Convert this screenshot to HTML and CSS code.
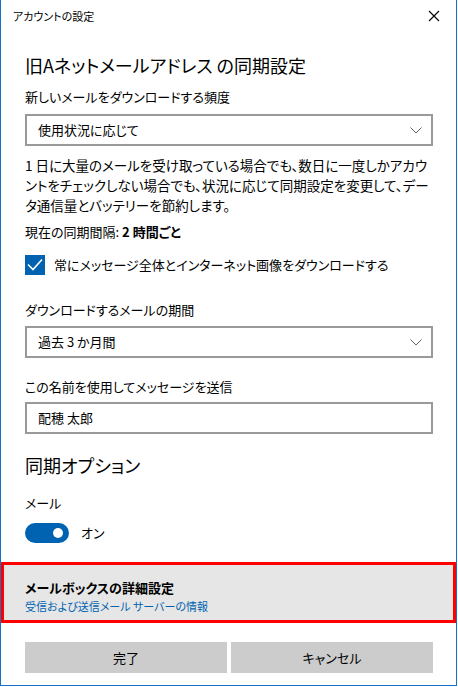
FILE: index.html
```html
<!DOCTYPE html>
<html lang="ja">
  <head>
    <meta charset="utf-8">
    <title>アカウントの設定</title>
    <link rel="stylesheet" href="styles.css">
  </head>
  <body>
    <div class="window">
      <div class="titlebar">
        <span class="caption">アカウントの設定</span>
        <span class="close">
          <svg width="12" height="12" viewBox="0 0 12 12">
            <path d="M1 1 L11 11 M11 1 L1 11" stroke="#000" stroke-width="1.1" fill="none"/>
          </svg>
        </span>
      </div>

      <div class="content">
        <div class="heading">旧Aネットメールアドレス の同期設定</div>

        <div class="label label-first">新しいメールをダウンロードする頻度</div>
        <div class="select">
          <span>使用状況に応じて</span>
          <svg class="chevron" width="12" height="7" viewBox="0 0 12 7">
            <polyline points="0.5,0.5 6,6 11.5,0.5" stroke="#666" stroke-width="1" fill="none"/>
          </svg>
        </div>

        <p class="description">
          <span>1 日に大量のメールを受け取っている場合でも、数日に一度しかアカウ</span>
          <span>ントをチェックしない場合でも、状況に応じて同期設定を変更して、デー</span>
          <span>タ通信量とバッテリーを節約します。</span>
        </p>

        <div class="interval">現在の同期間隔: <b>2 時間ごと</b></div>

        <div class="check-row">
          <span class="checkbox">
            <svg width="20" height="20" viewBox="0 0 20 20">
              <polyline points="3,9.5 8,14.5 17,4.5" stroke="#fff" stroke-width="1.6" fill="none"/>
            </svg>
          </span>
          <span>常にメッセージ全体とインターネット画像をダウンロードする</span>
        </div>

        <div class="label label-gap">ダウンロードするメールの期間</div>
        <div class="select select-tight">
          <span>過去 3 か月間</span>
          <svg class="chevron" width="12" height="7" viewBox="0 0 12 7">
            <polyline points="0.5,0.5 6,6 11.5,0.5" stroke="#666" stroke-width="1" fill="none"/>
          </svg>
        </div>

        <div class="label label-mid">この名前を使用してメッセージを送信</div>
        <div class="textbox">配穂 太郎</div>

        <div class="heading heading-sub">同期オプション</div>

        <div class="label label-mail">メール</div>
        <div class="toggle-row">
          <span class="toggle"><span class="knob"></span></span>
          <span>オン</span>
        </div>

        <div class="advanced">
          <div class="advanced-title">メールボックスの詳細設定</div>
          <div class="advanced-link">受信および送信メール サーバーの情報</div>
        </div>

        <div class="buttons">
          <button class="btn">完了</button>
          <button class="btn">キャンセル</button>
        </div>
      </div>
    </div>
  </body>
</html>
```

FILE: styles.css
```css
body {
  margin: 0;
  background: #fff;
  font-family: "Noto Sans CJK JP", "Noto Sans", sans-serif;
  font-feature-settings: "palt";
  color: #000;
}
.window {
  box-sizing: border-box;
  width: 457px;
  height: 686px;
  border: 1px solid #1672c6;
  border-top: none;
  background: #fff;
}
.titlebar {
  height: 32px;
  display: flex;
  align-items: center;
  justify-content: space-between;
  padding: 0 16px 0 12px;
}
.caption {
  font-size: 11px;
  line-height: 16px;
}
.close {
  display: flex;
}
.content {
  padding: 0 23px 0 24px;
}
.heading {
  margin-top: 19px;
  font-size: 18px;
  line-height: 28px;
}
.heading-sub {
  margin-top: 17px;
}
.label,
.description,
.interval,
.check-row,
.toggle-row,
.select,
.textbox {
  font-size: 13px;
  line-height: 20px;
}
.label-first {
  margin-top: 8px;
}
.label-gap {
  margin-top: 25px;
}
.label-mid {
  margin-top: 19px;
}
.label-mail {
  margin-top: 14px;
}
.select,
.textbox {
  box-sizing: border-box;
  height: 32px;
  border: 2px solid #999;
  display: flex;
  align-items: center;
  padding: 0 9px 0 11px;
}
.select {
  margin-top: 7px;
  justify-content: space-between;
}
.select-tight {
  margin-top: 6px;
}
.textbox {
  margin-top: 5px;
}
.chevron {
  display: block;
}
.description {
  margin: 9px 0 0;
  font-size: 13.5px;
}
.description span {
  display: block;
  white-space: nowrap;
}
.interval {
  margin-top: 7px;
}
.interval b {
  font-weight: bold;
}
.check-row {
  margin-top: 13px;
  display: flex;
  align-items: center;
  gap: 9px;
}
.checkbox {
  width: 20px;
  height: 20px;
  background: #0063b1;
  display: flex;
}
.toggle-row {
  margin-top: 10px;
  display: flex;
  align-items: center;
  gap: 12px;
}
.toggle {
  width: 44px;
  height: 20px;
  border-radius: 10px;
  background: #0063b1;
  display: flex;
  align-items: center;
  justify-content: flex-end;
  padding-right: 6px;
  box-sizing: border-box;
}
.knob {
  width: 10px;
  height: 10px;
  border-radius: 50%;
  background: #fff;
}
.advanced {
  margin: 19px -23px 0 -24px;
  border: 3px solid #ff0000;
  background: #e6e6e6;
  padding: 13px 21px 6px 21px;
}
.advanced-title {
  font-size: 13px;
  line-height: 20px;
  font-weight: bold;
}
.advanced-link {
  font-size: 11px;
  line-height: 16px;
  color: #0063b1;
}
.buttons {
  margin-top: 19px;
  display: flex;
  gap: 4px;
}
.btn {
  flex: 1;
  height: 31px;
  border: none;
  background: #cccccc;
  font-family: inherit;
  font-feature-settings: "palt";
  font-size: 13px;
  color: #000;
  padding: 0;
}
```
